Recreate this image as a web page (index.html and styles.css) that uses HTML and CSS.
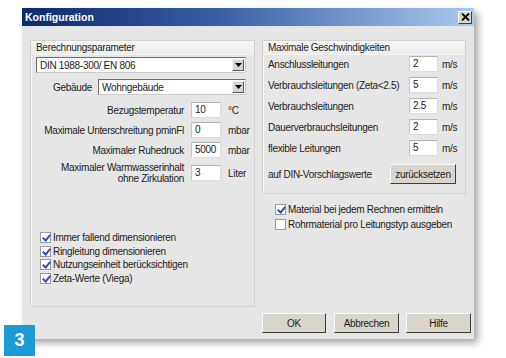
FILE: index.html
```
<!DOCTYPE html>
<html>
    <head>
        <title>Konfiguration</title>
        <link rel="stylesheet" href="styles.css">
    </head>
    <body>
        <div class="page">
        <div class="dialog">
            <div class="titlebar">
                <span class="title">Konfiguration</span>
                <span class="close">
                    <svg width="9" height="8" viewBox="0 0 9 8"><path d="M1 0.5 L8 7.5 M8 0.5 L1 7.5" stroke="#000" stroke-width="1.8"/></svg>
                </span>
            </div>

            <div class="content">
                <div class="groups">

                    <!-- left group -->
                    <div class="group group-left">
                        <div class="group-head">Berechnungsparameter</div>
                        <div class="combo combo-norm">
                            <span class="combo-text">DIN 1988-300/ EN 806</span>
                            <span class="combo-btn"><svg width="7" height="4" viewBox="0 0 7 4"><path d="M0 0 H7 L3.5 4 Z" fill="#000"/></svg></span>
                        </div>
                        <div class="building">
                            <span class="building-lbl">Gebäude</span>
                            <div class="combo">
                                <span class="combo-text">Wohngebäude</span>
                                <span class="combo-btn"><svg width="7" height="4" viewBox="0 0 7 4"><path d="M0 0 H7 L3.5 4 Z" fill="#000"/></svg></span>
                            </div>
                        </div>

                        <div class="params">
                            <span class="p-lbl">Bezugstemperatur</span>
                            <span class="field">10</span>
                            <span class="unit">°C</span>

                            <span class="p-lbl">Maximale Unterschreitung pminFl</span>
                            <span class="field">0</span>
                            <span class="unit">mbar</span>

                            <span class="p-lbl">Maximaler Ruhedruck</span>
                            <span class="field">5000</span>
                            <span class="unit">mbar</span>

                            <span class="p-lbl">Maximaler Warmwasserinhalt<br>ohne Zirkulation</span>
                            <span class="field">3</span>
                            <span class="unit">Liter</span>
                        </div>

                        <div class="checks checks-left">
                            <div class="check"><span class="box on"></span>Immer fallend dimensionieren</div>
                            <div class="check"><span class="box on"></span>Ringleitung dimensionieren</div>
                            <div class="check"><span class="box on"></span>Nutzungseinheit berücksichtigen</div>
                            <div class="check"><span class="box on"></span>Zeta-Werte (Viega)</div>
                        </div>
                    </div>

                    <!-- right column -->
                    <div class="right-col">
                        <div class="group group-right">
                            <div class="group-head">Maximale Geschwindigkeiten</div>
                            <div class="speeds">
                                <span>Anschlussleitungen</span><span class="field">2</span><span class="unit">m/s</span>
                                <span>Verbrauchsleitungen (Zeta&lt;2.5)</span><span class="field">5</span><span class="unit">m/s</span>
                                <span>Verbrauchsleitungen</span><span class="field">2.5</span><span class="unit">m/s</span>
                                <span>Dauerverbrauchsleitungen</span><span class="field">2</span><span class="unit">m/s</span>
                                <span>flexible Leitungen</span><span class="field">5</span><span class="unit">m/s</span>
                            </div>
                            <div class="reset-row">
                                <span>auf DIN-Vorschlagswerte</span>
                                <span class="btn btn-reset">zurücksetzen</span>
                            </div>
                        </div>
                        <div class="checks checks-right">
                            <div class="check"><span class="box on"></span>Material bei jedem Rechnen ermitteln</div>
                            <div class="check"><span class="box"></span>Rohrmaterial pro Leitungstyp ausgeben</div>
                        </div>
                    </div>
                </div>

                <div class="buttons">
                    <span class="btn btn-ok">OK</span>
                    <span class="btn">Abbrechen</span>
                    <span class="btn">Hilfe</span>
                </div>
            </div>
        </div>
        <div class="badge">3</div>
        </div>
    </body>
</html>
```

FILE: styles.css
```
html, body {
    margin: 0;
    background: #fff;
}

.page {
    position: relative;
    width: 506px;
    height: 358px;
    overflow: hidden;
    font-family: "Liberation Sans", Arial, sans-serif;
    font-size: 10px;
    letter-spacing: -0.3px;
    color: #1c1c1c;
    white-space: nowrap;
    padding-top: 8px;
    box-sizing: border-box;
}

.dialog {
    margin-left: 22px;
    width: 452px;
    height: 331px;
    background: #e6e6e6;
    display: flex;
    flex-direction: column;
    box-shadow: 4px 4px 7px rgba(0,0,0,0.35);
}

/* title bar */
.titlebar {
    height: 18px;
    display: flex;
    align-items: center;
    justify-content: space-between;
    padding: 0 2px 0 3px;
    background: linear-gradient(to right, #0c2a6c, #3b62a5 45%, #a9cbef);
}
.title {
    color: #fff;
    font-weight: bold;
    font-size: 10.5px;
    letter-spacing: 0;
}
.close {
    width: 12px;
    height: 11px;
    display: flex;
    align-items: center;
    justify-content: center;
    background: #d8d5ce;
    border: 1px solid;
    border-color: #fff #404040 #404040 #fff;
}

.content {
    flex: 1;
    display: flex;
    flex-direction: column;
    padding: 14px 8px 6px 8px;
}

.groups {
    display: flex;
    gap: 7px;
    align-items: flex-start;
}

.group {
    border: 1px solid #d2d2d2;
    box-shadow: inset 1px 1px 0 #fafafa;
    box-sizing: border-box;
}
.group-left {
    width: 225px;
    height: 267px;
}
.right-col {
    width: 204px;
}
.group-right {
    padding-bottom: 9px;
}

.group-head {
    height: 13px;
    line-height: 13px;
    padding-left: 5px;
    background: linear-gradient(#f7f7f7, #ececec);
    border-bottom: 1px solid #f4f4f4;
}

/* combos */
.combo {
    height: 16px;
    display: flex;
    align-items: center;
    justify-content: space-between;
    background: #fff;
    border: 1px solid;
    border-color: #6e6e6e #c8c8c8 #c8c8c8 #6e6e6e;
    box-sizing: border-box;
    padding: 0 1px 0 3px;
}
.combo-norm {
    margin: 2px 8px 0 5px;
}
.combo-btn {
    width: 12px;
    height: 12px;
    display: flex;
    align-items: center;
    justify-content: center;
    background: #d8d5ce;
    border: 1px solid;
    border-color: #f4f4f4 #5a5a5a #5a5a5a #f4f4f4;
    box-sizing: border-box;
}

.building {
    display: grid;
    grid-template-columns: 61px 1fr;
    column-gap: 6px;
    align-items: center;
    margin: 6px 8px 0 0;
}
.building-lbl {
    text-align: right;
}

/* parameter rows */
.params {
    display: grid;
    grid-template-columns: 153px 30px auto;
    column-gap: 7px;
    row-gap: 4px;
    align-items: center;
    margin-top: 7px;
}
.p-lbl {
    text-align: right;
    line-height: 11px;
}

.field {
    height: 16px;
    line-height: 14px;
    background: #fff;
    border: 1px solid #dcdcdc;
    border-top-color: #b4b4b4;
    border-left-color: #c4c4c4;
    box-sizing: border-box;
    padding-left: 3px;
}

/* checkboxes */
.checks-left {
    margin: 47px 0 0 9px;
}
.checks-left .check {
    height: 13.5px;
}
.checks-right {
    margin: 8px 0 0 13px;
}
.checks-right .check {
    height: 15px;
}
.check {
    display: flex;
    align-items: center;
}
.box {
    width: 11px;
    height: 11px;
    box-sizing: border-box;
    background: #fff;
    border: 1px solid #9a9a9a;
    margin-right: 2px;
    position: relative;
}
.box.on::after {
    content: "";
    position: absolute;
    left: 3px;
    top: 0px;
    width: 3px;
    height: 6px;
    border: solid #2d4fb8;
    border-width: 0 2px 2px 0;
    transform: rotate(40deg);
}

/* right group */
.speeds {
    display: grid;
    grid-template-columns: 1fr 29px 23px;
    column-gap: 4px;
    row-gap: 5px;
    align-items: center;
    padding-left: 5px;
    margin-top: 1px;
}
.reset-row {
    display: flex;
    align-items: center;
    justify-content: space-between;
    padding: 0 9px 0 5px;
    margin-top: 8px;
}

/* buttons */
.btn {
    height: 20px;
    width: 65px;
    box-sizing: border-box;
    display: flex;
    align-items: center;
    justify-content: center;
    background: #d9d5cd;
    border: 1px solid;
    border-color: #fafafa #3c3c3c #3c3c3c #fafafa;
}
.btn-reset {
    width: 66px;
}
.buttons {
    margin-top: auto;
    margin-right: -5px;
    display: flex;
    justify-content: flex-end;
    gap: 7px;
}
.btn-ok {
    width: 64px;
    margin-right: 1px;
}

.badge {
    position: absolute;
    left: 4px;
    top: 325px;
    width: 31px;
    height: 31px;
    background: #1b9ad6;
    color: #fff;
    font-weight: bold;
    font-size: 18px;
    letter-spacing: 0;
    display: flex;
    align-items: center;
    justify-content: center;
}
```
